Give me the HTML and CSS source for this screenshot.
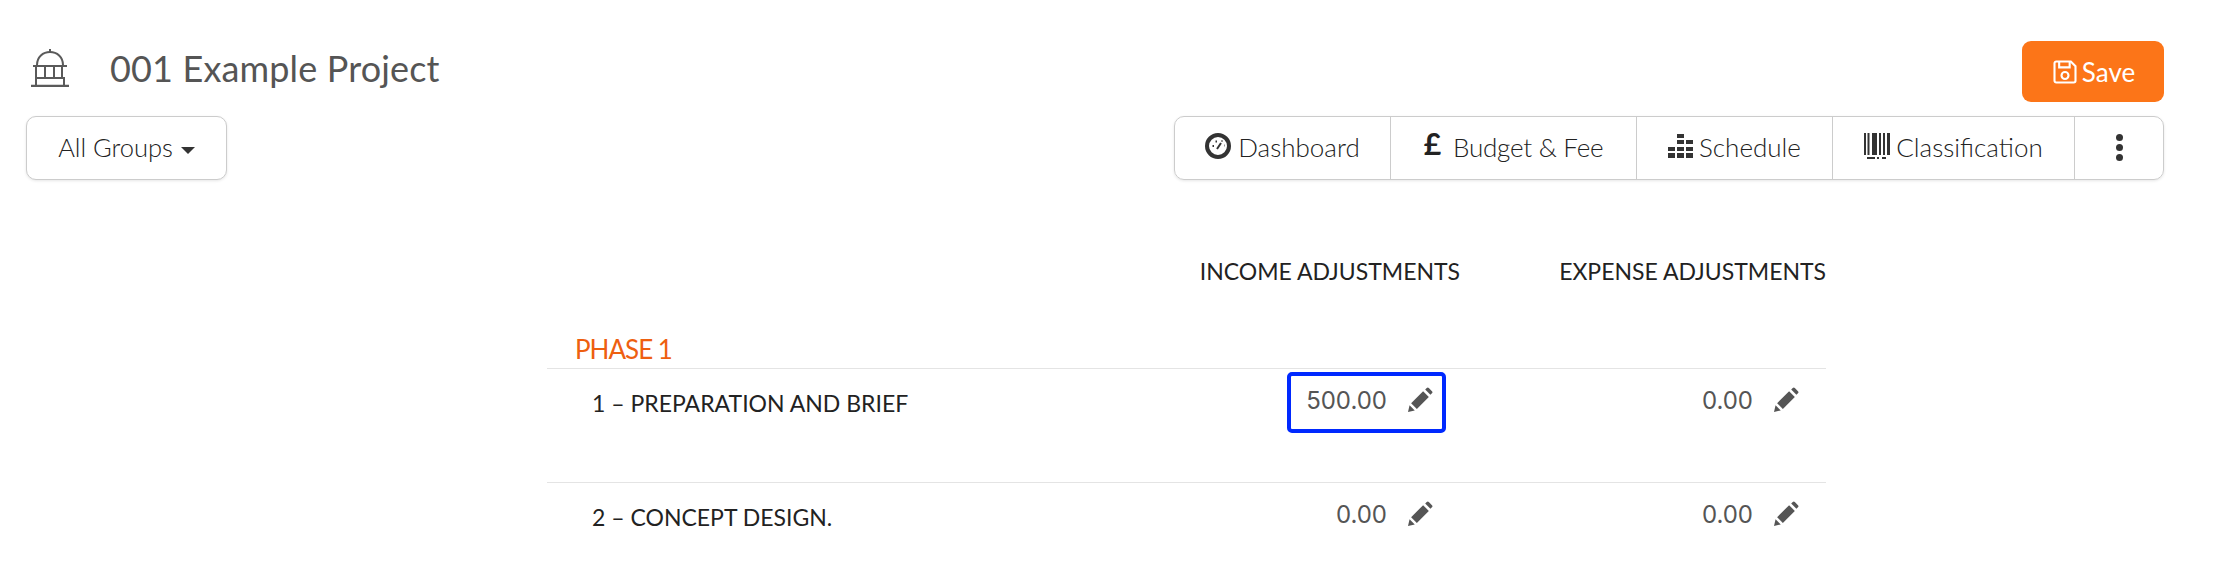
FILE: index.html
```html
<!DOCTYPE html>
<html lang="en">
<head>
  <meta charset="UTF-8">
  <meta name="viewport" content="width=device-width, initial-scale=1.0">
  <title>001 Example Project</title>
  <link rel="stylesheet" href="styles.css">
</head>
<body>
  <!-- Page header -->
  <div class="page-head">
    <div class="project-title">
      <svg class="project-icon" viewBox="0 0 38 38" fill="none" stroke="#5a5a5a" stroke-width="2">
        <path d="M19 0v3"/>
        <path d="M6 16C6 8 12 3 19 3s13 5 13 13"/>
        <path d="M2 17h34"/>
        <path d="M5 18v10M14 18v10M23 18v10M31 18v10"/>
        <path d="M4 29h30M5 29v7M33 29v7"/>
        <path d="M0 37h38" stroke-width="2.500"/>
      </svg>
      <h1>001 Example Project</h1>
    </div>
    <button class="save-btn" type="button">
      <svg viewBox="0 0 24 24" fill="none" stroke="#fff" stroke-width="1.800">
        <path d="M3 4.500a1.500 1.500 0 0 1 1.500-1.500H17l4 4v12.500a1.500 1.500 0 0 1-1.500 1.500h-15A1.500 1.500 0 0 1 3 19.500z"/>
        <path d="M7 3v5h9V3"/>
        <circle cx="12" cy="15" r="3"/>
      </svg>
      Save
    </button>
  </div>

  <!-- Filter and navigation -->
  <div class="toolbar">
    <button class="group-btn" type="button">All Groups <span class="caret"></span></button>
    <nav class="nav-group">
      <a class="nav-item nav-dashboard">
        <svg viewBox="0 0 26 26" fill="none" stroke="#333" stroke-width="4">
          <circle cx="13" cy="13" r="11"/>
          <path d="M12 16l4-6" stroke-width="2"/>
          <path d="M7.500 13h1.500M10.500 8.500h1.500M16.500 8h1M19 12.500h.5" stroke-width="2"/>
        </svg>
        Dashboard
      </a>
      <a class="nav-item nav-budget"><span class="pound">£</span> <span class="budget-label">Budget &amp; Fee</span></a>
      <a class="nav-item nav-schedule">
        <svg viewBox="0 0 25 24" fill="#333">
          <rect x="9" y="0" width="7" height="4"/>
          <rect x="9" y="6" width="7" height="4"/><rect x="18" y="6" width="7" height="4"/>
          <rect x="0" y="13" width="7" height="4"/><rect x="9" y="13" width="7" height="4"/><rect x="18" y="13" width="7" height="4"/>
          <rect x="0" y="19" width="7" height="5"/><rect x="9" y="19" width="7" height="5"/><rect x="18" y="19" width="7" height="5"/>
        </svg>
        Schedule
      </a>
      <a class="nav-item nav-class">
        <svg viewBox="0 0 26 26" fill="#333">
          <rect x="0" y="0" width="2" height="22"/><rect x="3.500" y="0" width="2" height="22"/>
          <rect x="8" y="0" width="5" height="22"/><rect x="15" y="0" width="2" height="22"/>
          <rect x="19" y="0" width="2" height="22"/><rect x="23" y="0" width="3" height="22"/>
          <rect x="3" y="24" width="8" height="2"/><rect x="13" y="24" width="2" height="2"/><rect x="18" y="24" width="4" height="2"/>
        </svg>
        Classification
      </a>
      <a class="nav-item nav-more">
        <span class="dot"></span><span class="dot"></span><span class="dot"></span>
      </a>
    </nav>
  </div>

  <!-- Adjustments table -->
  <div class="adjustments">
    <div class="adj-head">
      <div></div>
      <div class="col-title">INCOME ADJUSTMENTS</div>
      <div class="col-title">EXPENSE ADJUSTMENTS</div>
    </div>

    <div class="phase-name">PHASE 1</div>

    <div class="adj-row">
      <div class="row-name">1 – PREPARATION AND BRIEF</div>
      <div class="cell"><div class="value-box focused"><span>500.00</span>
        <svg class="pencil" viewBox="0 0 24 24"><path d="M0 24l1.500-6.500 5 5zM3 15.500L14.500 4l5.500 5.500L8.500 21zM16.500 2.500L18 1a1.400 1.400 0 0 1 2 0l3 3a1.400 1.400 0 0 1 0 2l-1.500 1.500z"/></svg>
      </div></div>
      <div class="cell"><div class="value-box"><span>0.00</span>
        <svg class="pencil" viewBox="0 0 24 24"><path d="M0 24l1.500-6.500 5 5zM3 15.500L14.500 4l5.500 5.500L8.500 21zM16.500 2.500L18 1a1.400 1.400 0 0 1 2 0l3 3a1.400 1.400 0 0 1 0 2l-1.500 1.500z"/></svg>
      </div></div>
    </div>

    <div class="adj-row">
      <div class="row-name">2 – CONCEPT DESIGN.</div>
      <div class="cell"><div class="value-box"><span>0.00</span>
        <svg class="pencil" viewBox="0 0 24 24"><path d="M0 24l1.500-6.500 5 5zM3 15.500L14.500 4l5.500 5.500L8.500 21zM16.500 2.500L18 1a1.400 1.400 0 0 1 2 0l3 3a1.400 1.400 0 0 1 0 2l-1.500 1.500z"/></svg>
      </div></div>
      <div class="cell"><div class="value-box"><span>0.00</span>
        <svg class="pencil" viewBox="0 0 24 24"><path d="M0 24l1.500-6.500 5 5zM3 15.500L14.500 4l5.500 5.500L8.500 21zM16.500 2.500L18 1a1.400 1.400 0 0 1 2 0l3 3a1.400 1.400 0 0 1 0 2l-1.500 1.500z"/></svg>
      </div></div>
    </div>
  </div>
</body>
</html>
```

FILE: styles.css
```css
/* General Styling */
body {
  background-color: #fff;
  font-family: Lato, "Open Sans", sans-serif;
  color: #333;
  margin: 0;
  padding: 0;
}

/* Page header */
.page-head {
  display: flex;
  justify-content: space-between;
  align-items: flex-start;
  padding: 41px 52px 0 31px;
  height: 116px;
  box-sizing: border-box;
}

.project-title {
  display: flex;
  align-items: center;
  gap: 41px;
  margin-top: 7px;
}

.project-icon {
  width: 38px;
  height: 38px;
}

.project-title h1 {
  margin: 0;
  font-size: 36px;
  font-weight: 400;
  letter-spacing: 0.15px;
  line-height: 40px;
  color: #555;
}

.save-btn {
  display: flex;
  align-items: center;
  justify-content: center;
  gap: 3px;
  width: 142px;
  height: 61px;
  background-color: #fc7518;
  color: #fff;
  font-family: inherit;
  font-size: 26px;
  font-weight: 400;
  border: none;
  border-radius: 9px;
}

.save-btn svg {
  width: 28px;
  height: 28px;
}

/* Filter and navigation */
.toolbar {
  display: flex;
  justify-content: space-between;
  padding: 0 52px 0 26px;
}

.group-btn {
  width: 201px;
  height: 64px;
  padding-bottom: 3px;
  background: #fff;
  font-family: inherit;
  font-size: 25.500px;
  font-weight: 300;
  color: #222;
  border: 1px solid #ccc;
  border-radius: 10px;
  box-shadow: 0 1px 3px rgba(0, 0, 0, 0.1);
}

.caret {
  display: inline-block;
  margin-left: 1px;
  vertical-align: middle;
  border-top: 7px solid #333;
  border-left: 7px solid transparent;
  border-right: 7px solid transparent;
}

.nav-group {
  display: flex;
  height: 64px;
  box-sizing: border-box;
  border: 1px solid #ccc;
  border-radius: 10px;
  box-shadow: 0 1px 3px rgba(0, 0, 0, 0.1);
}

.nav-item {
  display: flex;
  align-items: center;
  justify-content: center;
  gap: 6px;
  padding-bottom: 2px;
  font-size: 26px;
  font-weight: 300;
  color: #222;
  border-right: 1px solid #ccc;
  box-sizing: border-box;
}

.nav-item svg {
  flex-shrink: 0;
}

.nav-dashboard { width: 216px; gap: 7px; }
.nav-budget { width: 246px; gap: 12px; }
.nav-schedule { width: 196px; }
.nav-class { width: 242px; }
.nav-more { width: 88px; flex-direction: column; gap: 3px; border-right: none; }

.nav-dashboard svg { width: 26px; height: 26px; margin-top: -3px; }
.nav-schedule svg { width: 25px; height: 24px; margin-top: -3px; }
.nav-class svg { width: 26px; height: 26px; margin-top: -3px; }

.budget-label {
  letter-spacing: -0.25px;
}

.pound {
  font-size: 30px;
  font-weight: 700;
  margin-top: -8px;
}

.dot {
  width: 7px;
  height: 7px;
  border-radius: 50%;
  background-color: #333;
}

/* Adjustments table */
.adjustments {
  width: 1279px;
  margin-left: 547px;
}

.adj-head, .adj-row {
  display: grid;
  grid-template-columns: 1fr 366px 366px;
}

.adj-head {
  padding-top: 76px;
  line-height: 30px;
}

.col-title {
  text-align: right;
  font-size: 23px;
  color: #222;
}

.phase-name {
  margin-top: 47px;
  padding: 0 0 3px 28px;
  font-size: 26px;
  letter-spacing: -1px;
  line-height: 32px;
  color: #ee5f10;
}

.adj-row {
  height: 114px;
  box-sizing: border-box;
  border-top: 1px solid #e4e4e4;
}

.adj-row:last-child {
  height: 83px;
}

.row-name {
  padding: 19px 0 0 45px;
  font-size: 23px;
  line-height: 30px;
  color: #222;
}

.cell {
  display: flex;
  justify-content: flex-end;
  align-items: flex-start;
  padding: 3px 14px 0 0;
}

.value-box {
  display: flex;
  align-items: flex-start;
  gap: 21px;
  height: 61px;
  padding: 11px 9px 0 15px;
  box-sizing: border-box;
  border: 4px solid transparent;
  border-radius: 5px;
  font-family: Inter, sans-serif;
  font-size: 24px;
  font-weight: 400;
  line-height: 28px;
  color: #555;
}

.value-box.focused {
  border-color: #0029ff;
}

.pencil {
  width: 25px;
  height: 25px;
  fill: #555;
}
```
